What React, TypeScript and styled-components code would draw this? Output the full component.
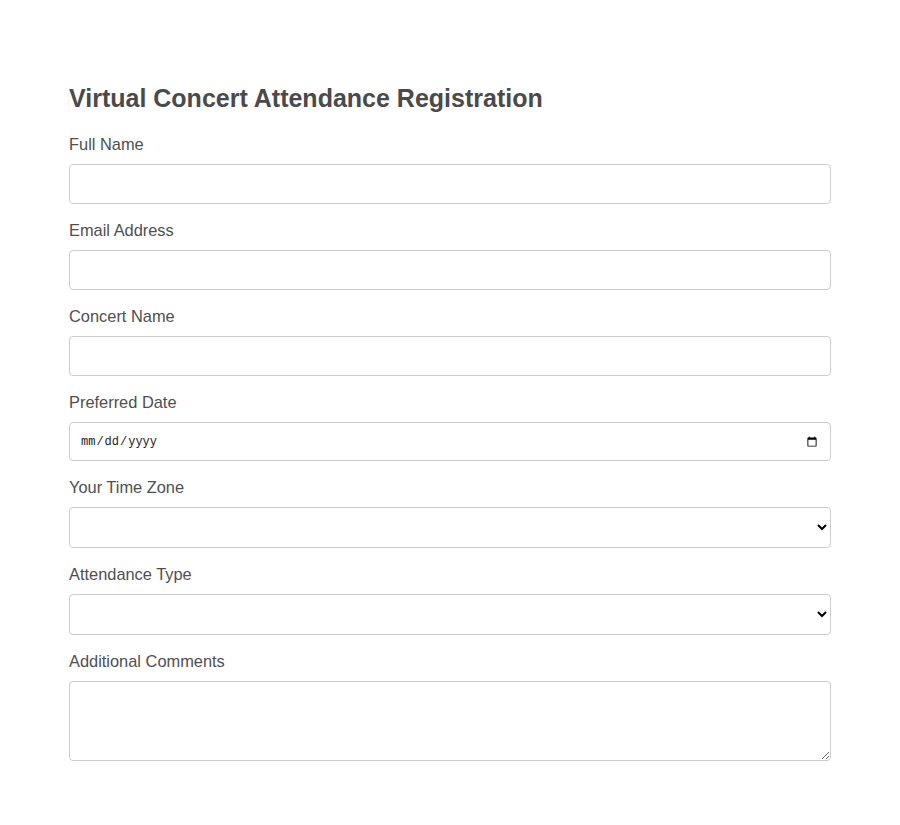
import React from 'react';
import styled, { createGlobalStyle } from 'styled-components';

const GlobalStyle = createGlobalStyle`
  body {
    margin: 0;
    background: #ffffff;
    font-family: "Liberation Sans", Arial, sans-serif;
  }
`;

const Page = styled.div`
  display: flex;
  justify-content: center;
  padding: 84px 0 40px;
`;

const Form = styled.form`
  width: 762px;
  display: flex;
  flex-direction: column;
`;

const Title = styled.h2`
  margin: 0 0 23px;
  font-size: 25px;
  line-height: 28px;
  font-weight: bold;
  color: #4a4a4a;
`;

const Field = styled.div`
  display: flex;
  flex-direction: column;
  margin-bottom: 17px;
`;

const Label = styled.label`
  font-size: 16.4px;
  line-height: 18px;
  color: #4f4f4f;
  margin-bottom: 11px;
`;

const Input = styled.input`
  box-sizing: border-box;
  width: 100%;
  height: 40px;
  padding: 10px;
  border: 1px solid #cccccc;
  border-radius: 4px;
  font-size: 16px;
  font-family: inherit;
  background: #fff;
`;

const DateInput = styled(Input)`
  height: 39px;
  font-size: 12px;
  font-family: "Liberation Mono", monospace;
  color: #222;
`;

const Select = styled.select`
  box-sizing: border-box;
  width: 100%;
  height: 41px;
  padding: 10px;
  border: 1px solid #cccccc;
  border-radius: 4px;
  font-size: 16px;
  font-family: inherit;
  background: #fff;
`;

const TextArea = styled.textarea`
  box-sizing: border-box;
  width: 100%;
  height: 80px;
  padding: 10px;
  border: 1px solid #cccccc;
  border-radius: 4px;
  font-size: 16px;
  font-family: inherit;
`;

const App = () => {
  return (
    <>
      <GlobalStyle />
      <Page>
        <Form>
          <Title>Virtual Concert Attendance Registration</Title>
          <Field>
            <Label htmlFor="name">Full Name</Label>
            <Input id="name" type="text" />
          </Field>
          <Field>
            <Label htmlFor="email">Email Address</Label>
            <Input id="email" type="email" />
          </Field>
          <Field>
            <Label htmlFor="concert">Concert Name</Label>
            <Input id="concert" type="text" />
          </Field>
          <Field>
            <Label htmlFor="date">Preferred Date</Label>
            <DateInput id="date" type="date" />
          </Field>
          <Field>
            <Label htmlFor="tz">Your Time Zone</Label>
            <Select id="tz" defaultValue="">
              <option value=""></option>
              <option value="utc">UTC</option>
            </Select>
          </Field>
          <Field>
            <Label htmlFor="type">Attendance Type</Label>
            <Select id="type" defaultValue="">
              <option value=""></option>
              <option value="live">Live Stream</option>
            </Select>
          </Field>
          <Field>
            <Label htmlFor="comments">Additional Comments</Label>
            <TextArea id="comments" />
          </Field>
        </Form>
      </Page>
    </>
  );
};

export default App;
